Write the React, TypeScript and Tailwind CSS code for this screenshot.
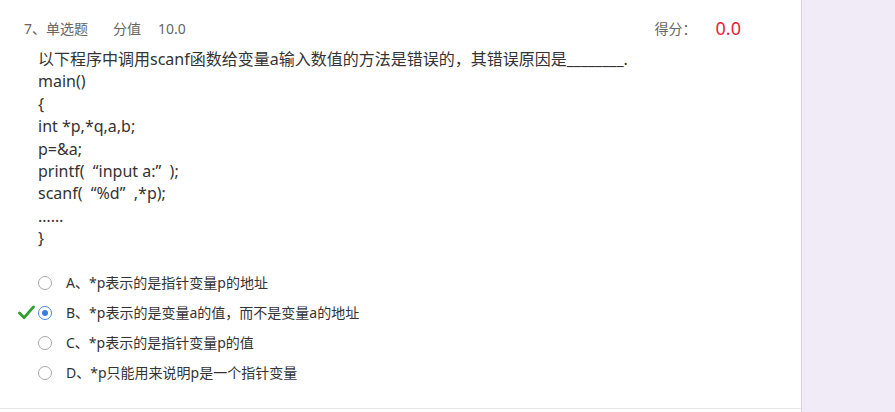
import React from 'react';

const codeLines = [
  '以下程序中调用scanf函数给变量a输入数值的方法是错误的，其错误原因是________.',
  'main()',
  '{',
  'int *p,*q,a,b;',
  'p=&a;',
  'printf(  “input a:”  );',
  'scanf(  “%d”  ,*p);',
  '……',
  '}',
];

const options = [
  { key: 'A', text: '*p表示的是指针变量p的地址' },
  { key: 'B', text: '*p表示的是变量a的值，而不是变量a的地址' },
  { key: 'C', text: '*p表示的是指针变量p的值' },
  { key: 'D', text: '*p只能用来说明p是一个指针变量' },
];

const selected = 'B';

const App: React.FC = () => {
  return (
    <div
      className="flex w-[895px] h-[412px] overflow-hidden bg-[#f1eaf7]"
      style={{ fontFamily: '"Noto Sans", "Noto Sans CJK SC", sans-serif' }}
    >
      <div className="w-[802px] h-full bg-white border-r border-[#d9d0e3] flex flex-col">
        <div className="flex-1 border-b border-[#e6e6e6] mb-[3px]">
          {/* header */}
          <div className="flex items-center h-[20px] mt-[18px] pl-[24px] pr-[60px] text-[14px] text-[#666]">
            <span>7、单选题</span>
            <span className="ml-[25px]">分值</span>
            <span className="ml-[17px]">10.0</span>
            <span className="ml-auto">得分：</span>
            <span className="ml-[19px] text-[18px] text-[#e8233c]">0.0</span>
          </div>

          {/* question */}
          <div className="mt-[10px] pl-[38px] text-[16px] leading-[22.4px] text-[#333]">
            {codeLines.map((line, i) => (
              <div key={i} className="whitespace-pre">{line}</div>
            ))}
          </div>

          {/* options */}
          <div className="mt-[18px] flex flex-col">
            {options.map(opt => {
              const isSel = opt.key === selected;
              return (
                <div key={opt.key} className="flex items-center h-[30px] text-[14px] text-[#333]">
                  <div className="w-[38px] flex justify-center pl-[14px]">
                    {isSel && (
                      <svg width="17" height="15" viewBox="0 0 18 16">
                        <path d="M1.5 8.5 L6.5 13.5 L16.5 2" fill="none" stroke="#2ea02e" strokeWidth="3" strokeLinecap="round" strokeLinejoin="round" />
                      </svg>
                    )}
                  </div>
                  <span
                    className={`w-[14px] h-[14px] rounded-full border flex items-center justify-center ${isSel ? 'border-[#4a86e0]' : 'border-[#a8a8a8]'}`}
                  >
                    {isSel && <span className="w-[6px] h-[6px] rounded-full bg-[#3c7de0] block" />}
                  </span>
                  <span className="ml-[14px]">{opt.key}、{opt.text}</span>
                </div>
              );
            })}
          </div>
        </div>
      </div>
    </div>
  );
};

export default App;
